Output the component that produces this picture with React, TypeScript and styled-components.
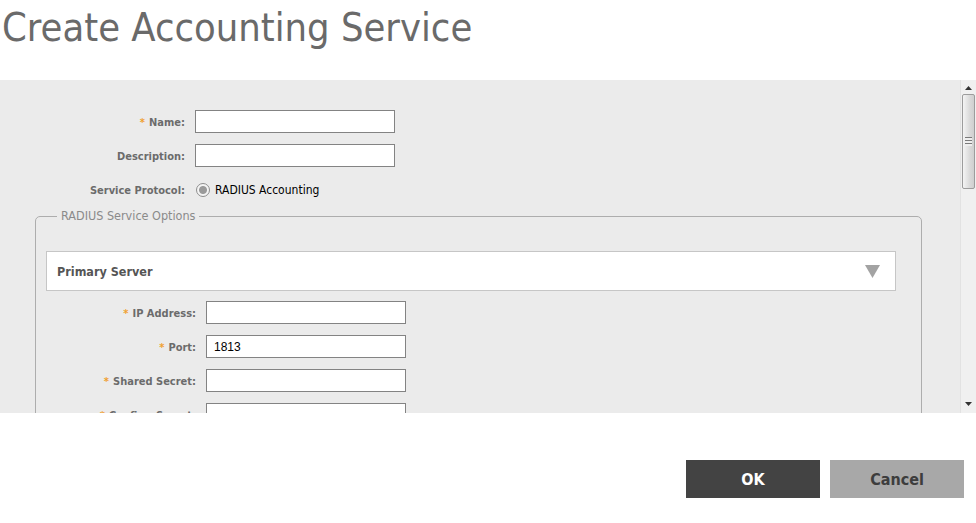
import React from "react";
import styled, { createGlobalStyle } from "styled-components";

const GlobalStyle = createGlobalStyle`
  html, body { margin: 0; padding: 0; background: #ffffff; }
  body { font-family: "DejaVu Sans Condensed", "DejaVu Sans", "Liberation Sans", sans-serif; }
  * { box-sizing: border-box; }
`;

const Page = styled.div`
  width: 976px;
  height: 523px;
  display: flex;
  flex-direction: column;
  overflow: hidden;
`;

const Header = styled.div`
  height: 80px;
  padding: 3px 0 0 2px;
`;

const Title = styled.h1`
  margin: 0;
  font-family: "DejaVu Sans Condensed", "DejaVu Sans", sans-serif;
  font-weight: normal;
  font-size: 39.5px;
  line-height: 48px;
  color: #6a6a6a;
`;

const Panel = styled.div`
  height: 333px;
  display: flex;
  background: #ebebeb;
`;

const Content = styled.div`
  flex: 1;
  overflow: hidden;
  padding-top: 30px;
`;

const Row = styled.div<{ $labelWidth: number }>`
  display: grid;
  grid-template-columns: ${(p) => p.$labelWidth}px auto;
  column-gap: 10px;
  align-items: center;
  height: 23px;
  margin-bottom: 11px;
`;

const Label = styled.label`
  text-align: right;
  font-size: 11px;
  font-weight: bold;
  color: #6b6b6b;
  white-space: nowrap;
  padding-top: 1px;
`;

const Star = styled.span`
  color: #f0a030;
  margin-right: 4px;
`;

const TextInput = styled.input`
  width: 200px;
  height: 23px;
  border: 1px solid #838383;
  background: #ffffff;
  padding: 0 7px;
  font-family: "Liberation Sans", Arial, sans-serif;
  font-size: 12px;
  color: #000;
  outline: none;
`;

const RadioWrap = styled.div`
  display: flex;
  align-items: center;
  gap: 5px;
  font-size: 12px;
  color: #000;
  padding-top: 1px;
`;

const RadioCircle = styled.span`
  width: 14px;
  height: 14px;
  border-radius: 50%;
  border: 1px solid #8e8e8e;
  background: radial-gradient(circle, #9a9a9a 0 3.5px, #f4f4f4 4.5px);
  display: inline-block;
  margin-left: 1px;
`;

const Fieldset = styled.fieldset`
  margin: -3px 0 0 35px;
  width: 887px;
  border: 1px solid #adadad;
  border-radius: 5px;
  padding: 0 25px 0 10px;
  min-height: 260px;
`;

const Legend = styled.legend`
  margin-left: 11px;
  padding: 0 4px;
  font-size: 12.5px;
  line-height: 14px;
  color: #8a8a8a;
`;

const SectionHeader = styled.div`
  margin-top: 28px;
  height: 40px;
  width: 850px;
  background: #ffffff;
  border: 1px solid #c6c6c6;
  display: flex;
  align-items: center;
  justify-content: space-between;
  padding: 0 15px 0 10px;
  margin-bottom: 10px;
`;

const SectionTitle = styled.span`
  font-size: 12.5px;
  font-weight: bold;
  color: #555555;
`;

const Scrollbar = styled.div`
  width: 16px;
  background: #f0f0f0;
  border-left: 1px solid #e2e2e2;
  display: flex;
  flex-direction: column;
  align-items: center;
  padding-top: 6px;
`;

const Arrow = styled.svg<{ $bottom?: boolean }>`
  display: block;
  margin-bottom: ${(p) => (p.$bottom ? "7px" : "0")};
`;

const Thumb = styled.div`
  margin-top: 4px;
  width: 13px;
  height: 95px;
  border: 1px solid #9c9c9c;
  border-radius: 2px;
  background: linear-gradient(to right, #f4f4f4, #dadada 60%, #cfcfcf);
  display: flex;
  align-items: center;
  justify-content: center;
`;

const Grip = styled.div`
  width: 7px;
  height: 9px;
  background: repeating-linear-gradient(to bottom, #7a7a7a 0 1px, #eeeeee 1px 3px);
`;

const Spacer = styled.div`
  flex: 1;
`;

const Footer = styled.div`
  flex: 1;
  display: flex;
  justify-content: flex-end;
  align-items: flex-start;
  gap: 10px;
  padding: 47px 12px 0 0;
`;

const Button = styled.button<{ $primary?: boolean }>`
  width: 134px;
  height: 38px;
  border: none;
  background: ${(p) => (p.$primary ? "#434343" : "#a8a8a8")};
  color: ${(p) => (p.$primary ? "#ffffff" : "#3d3d3d")};
  font-family: "DejaVu Sans Condensed", "DejaVu Sans", sans-serif;
  font-weight: bold;
  font-size: 16px;
`;

type Field = { label: string; required?: boolean; value?: string };

const topFields: Field[] = [
  { label: "Name:", required: true },
  { label: "Description:" },
];

const serverFields: Field[] = [
  { label: "IP Address:", required: true },
  { label: "Port:", required: true, value: "1813" },
  { label: "Shared Secret:", required: true },
  { label: "Confirm Secret:", required: true },
];

function FieldRow({ f, w }: { f: Field; w: number }) {
  return (
    <Row $labelWidth={w}>
      <Label>
        {f.required && <Star>*</Star>}
        {f.label}
      </Label>
      <TextInput defaultValue={f.value ?? ""} />
    </Row>
  );
}

export default function App() {
  return (
    <Page>
      <GlobalStyle />
      <Header>
        <Title>Create Accounting Service</Title>
      </Header>
      <Panel>
        <Content>
          {topFields.map((f) => (
            <FieldRow key={f.label} f={f} w={185} />
          ))}
          <Row $labelWidth={185}>
            <Label>Service Protocol:</Label>
            <RadioWrap>
              <RadioCircle />
              RADIUS Accounting
            </RadioWrap>
          </Row>
          <Fieldset>
            <Legend>RADIUS Service Options</Legend>
            <SectionHeader>
              <SectionTitle>Primary Server</SectionTitle>
              <svg width="15" height="13" viewBox="0 0 15 13">
                <polygon points="0,0 15,0 7.5,13" fill="#a3a3a3" />
              </svg>
            </SectionHeader>
            {serverFields.map((f) => (
              <FieldRow key={f.label} f={f} w={150} />
            ))}
          </Fieldset>
        </Content>
        <Scrollbar>
          <Arrow width="7" height="4" viewBox="0 0 7 4">
            <polygon points="0,4 7,4 3.5,0" fill="#333" />
          </Arrow>
          <Thumb>
            <Grip />
          </Thumb>
          <Spacer />
          <Arrow $bottom width="7" height="4" viewBox="0 0 7 4">
            <polygon points="0,0 7,0 3.5,4" fill="#333" />
          </Arrow>
        </Scrollbar>
      </Panel>
      <Footer>
        <Button $primary>OK</Button>
        <Button>Cancel</Button>
      </Footer>
    </Page>
  );
}
